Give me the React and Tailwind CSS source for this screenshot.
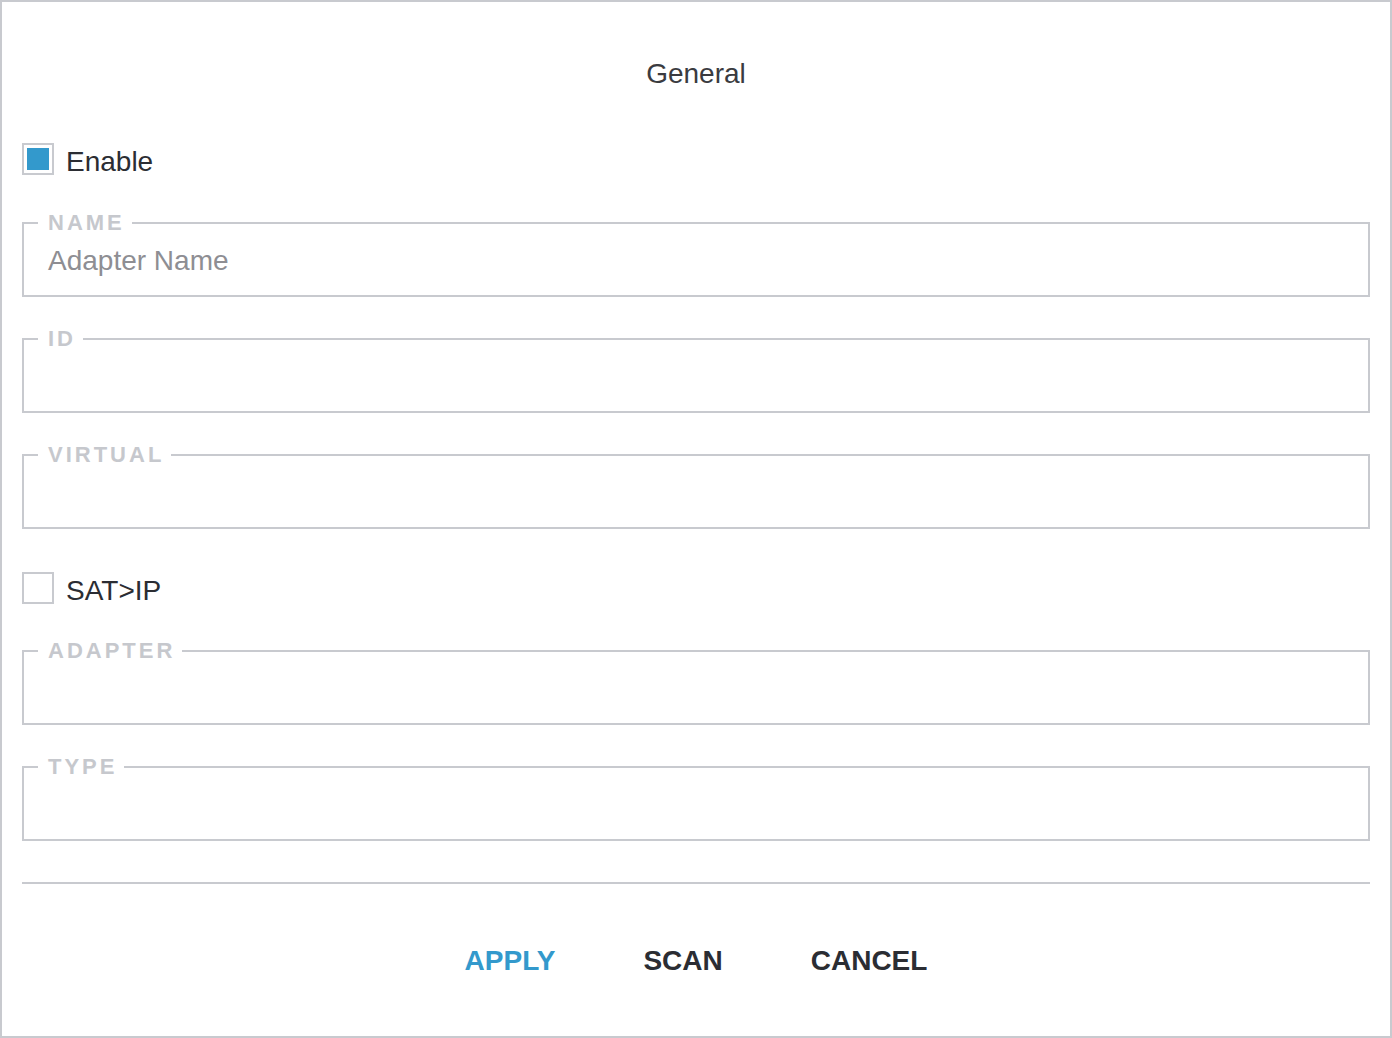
const fields = [
  { key: "name", label: "Name", value: "Adapter Name", gap: "mt-[37px]" },
  { key: "id", label: "ID", value: "", gap: "mt-[31px]" },
  { key: "virtual", label: "Virtual", value: "", gap: "mt-[31px]" },
];

const satFields = [
  { key: "adapter", label: "Adapter", value: "", gap: "mt-[36px]" },
  { key: "type", label: "Type", value: "", gap: "mt-[31px]" },
];

function Checkbox({ checked, label, className = "" }) {
  return (
    <div className={`flex h-[32px] items-start gap-[12px] ${className}`}>
      <span className="flex h-[32px] w-[32px] shrink-0 border-2 border-[#c8cacf] bg-white p-[3px]">
        {checked && <span className="h-full w-full bg-[#3399cc]" />}
      </span>
      <span className="pt-[3px] text-[28px] leading-[32px] text-[#2b2d33]">{label}</span>
    </div>
  );
}

function Field({ label, value, className = "" }) {
  return (
    <fieldset className={`h-[85px] border-2 border-[#c8cacf] pl-[14px] ${className}`}>
      <legend className="pl-[10px] pr-[7px] text-[22px] font-bold uppercase leading-[22px] tracking-[3px] text-[#c6c8cd]">
        {label}
      </legend>
      <div className="mt-[11px] pl-[10px] text-[28px] leading-[32px] text-[#8e8e93]">{value}</div>
    </fieldset>
  );
}

export default function App() {
  return (
    <div className="h-[1038px] w-[1392px] border-2 border-[#c8cacf] bg-white px-[20px] pt-[56px] font-['Liberation_Sans',Arial,sans-serif]">
      <h1 className="text-center text-[28px] font-light leading-[32px] text-[#3a3b40]">General</h1>

      <Checkbox checked label="Enable" className="mt-[53px]" />

      {fields.map((f) => (
        <Field key={f.key} label={f.label} value={f.value} className={f.gap} />
      ))}

      <Checkbox label="SAT>IP" className="mt-[43px]" />

      {satFields.map((f) => (
        <Field key={f.key} label={f.label} value={f.value} className={f.gap} />
      ))}

      <div className="mt-[41px] h-[2px] bg-[#c8cacf]" />

      <div className="mt-[61px] flex justify-center gap-[88px] text-[28px] font-bold leading-[32px]">
        <button className="uppercase text-[#3399cc]">Apply</button>
        <button className="uppercase text-[#2b2d33]">Scan</button>
        <button className="uppercase text-[#2b2d33]">Cancel</button>
      </div>
    </div>
  );
}
